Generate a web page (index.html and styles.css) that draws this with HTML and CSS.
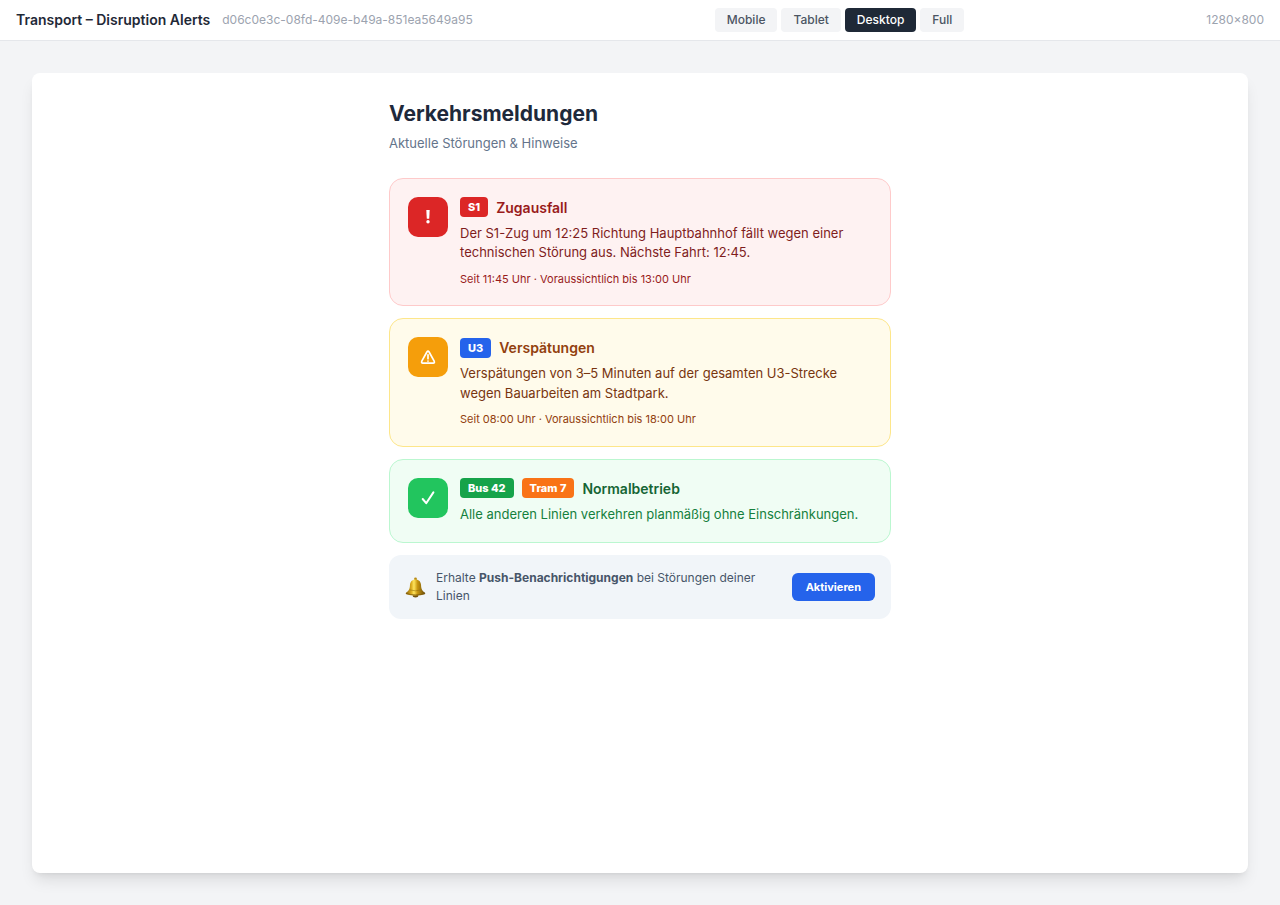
FILE: index.html
```html
<!DOCTYPE html>
<html lang="de">
<head>
<meta charset="utf-8">
<meta name="viewport" content="width=device-width, initial-scale=1">
<title>Transport – Disruption Alerts</title>
<link rel="stylesheet" href="styles.css">
</head>
<body>
<header class="toolbar">
  <div class="toolbar-info">
    <span class="toolbar-title">Transport – Disruption Alerts</span>
    <span class="toolbar-muted">d06c0e3c-08fd-409e-b49a-851ea5649a95</span>
  </div>
  <div class="sizes">
    <button type="button" class="size">Mobile</button>
    <button type="button" class="size">Tablet</button>
    <button type="button" class="size size-active" aria-pressed="true">Desktop</button>
    <button type="button" class="size">Full</button>
  </div>
  <span class="toolbar-muted">1280×800</span>
</header>
<div class="stage">
  <main class="preview">
    <div class="content">
      <h1 class="title">Verkehrsmeldungen</h1>
      <p class="subtitle">Aktuelle Störungen &amp; Hinweise</p>
      <div class="alerts">
        <article class="alert alert-red">
          <div class="alert-icon" aria-hidden="true">
            <svg width="16" height="16" viewBox="0 0 16 16" fill="#fff"><path d="M6.300 1h3.400l-.5 8.700H6.800z"/><circle cx="8" cy="12.700" r="1.700"/></svg>
          </div>
          <div class="alert-body">
            <div class="alert-head"><span class="line line-s1">S1</span><h2 class="alert-title">Zugausfall</h2></div>
            <p class="alert-text">Der S1-Zug um 12:25 Richtung Hauptbahnhof fällt wegen einer technischen Störung aus. Nächste Fahrt: 12:45.</p>
            <p class="alert-meta">Seit 11:45 Uhr · Voraussichtlich bis 13:00 Uhr</p>
          </div>
        </article>
        <article class="alert alert-amber">
          <div class="alert-icon" aria-hidden="true">
            <svg width="16" height="16" viewBox="0 0 16 16" fill="none" stroke="#fff" stroke-width="1.700" stroke-linejoin="round" stroke-linecap="round"><path d="M6.900 3Q8 1.400 9.100 3L14.200 12.200Q14.900 14.200 13.200 14.200H2.800Q1.100 14.200 1.800 12.200Z"/><path d="M8 5.800v3.900M8 12v.1"/></svg>
          </div>
          <div class="alert-body">
            <div class="alert-head"><span class="line line-u3">U3</span><h2 class="alert-title">Verspätungen</h2></div>
            <p class="alert-text">Verspätungen von 3–5 Minuten auf der gesamten U3-Strecke wegen Bauarbeiten am Stadtpark.</p>
            <p class="alert-meta">Seit 08:00 Uhr · Voraussichtlich bis 18:00 Uhr</p>
          </div>
        </article>
        <article class="alert alert-green">
          <div class="alert-icon" aria-hidden="true">
            <svg width="16" height="16" viewBox="0 0 16 16" fill="none" stroke="#fff" stroke-width="2" stroke-linecap="round" stroke-linejoin="round"><path d="M2.700 9l3.500 4.200L13.400 2.400"/></svg>
          </div>
          <div class="alert-body">
            <div class="alert-head"><span class="line line-bus">Bus 42</span><span class="line line-tram">Tram 7</span><h2 class="alert-title">Normalbetrieb</h2></div>
            <p class="alert-text">Alle anderen Linien verkehren planmäßig ohne Einschränkungen.</p>
          </div>
        </article>
        <section class="push">
          <svg class="bell" width="21" height="21" viewBox="0 0 22 22" aria-hidden="true">
            <defs>
              <linearGradient id="gold" x1="0" x2="1" y1="0" y2="0">
                <stop offset="0" stop-color="#8a6410"/><stop offset=".28" stop-color="#d9a91c"/><stop offset=".42" stop-color="#ffe45c"/><stop offset=".6" stop-color="#c8960f"/><stop offset="1" stop-color="#65490c"/>
              </linearGradient>
            </defs>
            <circle cx="11" cy="2" r="1.500" fill="#b78a19"/>
            <ellipse cx="11" cy="19.500" rx="3" ry="2" fill="#71500d"/>
            <path d="M11 2.500C7.300 2.500 5.400 5 5.200 8.500C5 13 4 14.800 1.200 16.300Q.2 17.300 1.300 18Q5 19.500 11 19.500T20.700 18Q21.800 17.300 20.800 16.300C18 14.800 17 13 16.800 8.500C16.600 5 14.700 2.500 11 2.500Z" fill="url(#gold)"/>
            <path d="M1.200 17.200Q6 18.800 11 18.800T20.800 17.200" fill="none" stroke="#7c590d" stroke-width=".8"/>
            <path d="M5 13.500Q11 15.500 17 13.500" fill="none" stroke="#93700e" stroke-width=".6"/>
          </svg>
          <p class="push-text">Erhalte <strong>Push-Benachrichtigungen</strong> bei Störungen deiner Linien</p>
          <button type="button" class="activate">Aktivieren</button>
        </section>
      </div>
    </div>
  </main>
</div>
</body>
</html>
```
FILE: styles.css
```css
* { box-sizing: border-box; }
body, h1, h2, p { margin: 0; }
body {
  min-height: 100vh;
  display: flex;
  flex-direction: column;
  background: #f3f4f6;
  font-family: Inter, "Liberation Sans", sans-serif;
  line-height: 1.5;
}
button { font-family: inherit; border: 0; cursor: pointer; }
.toolbar {
  display: flex;
  align-items: center;
  justify-content: space-between;
  padding: 8px 16px;
  background: #fff;
  border-bottom: 1px solid #e5e7eb;
}
.toolbar-info { display: flex; align-items: center; gap: 12px; }
.toolbar-title { font-size: 14px; line-height: 20px; font-weight: 600; color: #1f2937; }
.toolbar-muted { font-size: 12px; line-height: 16px; color: #9ca3af; }
.sizes { display: flex; gap: 4px; }
.size {
  padding: 4px 12px;
  border-radius: 4px;
  background: #f3f4f6;
  color: #4b5563;
  font-size: 12px;
  line-height: 16px;
  font-weight: 500;
}
.size-active { background: #1f2937; color: #fff; }
.stage { flex: 1; display: flex; padding: 32px; }
.preview {
  flex: 1;
  background: #fff;
  border-radius: 8px;
  padding: 24px;
  box-shadow: 0 10px 15px -3px rgba(0, 0, 0, .1), 0 4px 6px -4px rgba(0, 0, 0, .1);
}
.content { max-width: 502px; margin: 0 auto; }
.title { font-size: 21px; line-height: 33px; font-weight: 700; color: #1e293b; }
.subtitle { margin: 4px 0 24px; font-size: 13px; color: #64748b; }
.alerts { display: flex; flex-direction: column; gap: 12px; }
.alert {
  display: flex;
  gap: 12px;
  padding: 18px;
  border: 1px solid;
  border-radius: 14px;
}
.alert-icon {
  flex: none;
  width: 40px;
  height: 40px;
  display: grid;
  place-items: center;
  border-radius: 10px;
}
.alert-body { flex: 1; }
.alert-head { display: flex; align-items: center; gap: 8px; margin-bottom: 6px; }
.alert-title { font-size: 14px; font-weight: 600; }
.alert-text { font-size: 13px; }
.alert-meta { margin-top: 8px; font-size: 11px; }
.line {
  padding: 2px 8px;
  border-radius: 4px;
  color: #fff;
  font-size: 11px;
  line-height: 16px;
  font-weight: 800;
}
.line-s1 { background: #dc2626; }
.line-u3 { background: #2563eb; }
.line-bus { background: #16a34a; }
.line-tram { background: #f97316; }
.alert-red { background: #fef2f2; border-color: #fecaca; color: #7f1d1d; }
.alert-red .alert-icon { background: #dc2626; }
.alert-red .alert-title, .alert-red .alert-meta { color: #991b1b; }
.alert-amber { background: #fffbeb; border-color: #fde68a; color: #78350f; }
.alert-amber .alert-icon { background: #f59e0b; }
.alert-amber .alert-title, .alert-amber .alert-meta { color: #92400e; }
.alert-green { background: #f0fdf4; border-color: #bbf7d0; color: #15803d; }
.alert-green .alert-icon { background: #22c55e; }
.alert-green .alert-title { color: #166534; }
.push {
  display: flex;
  align-items: center;
  gap: 10px;
  padding: 14px 16px;
  border-radius: 12px;
  background: #f1f5f9;
}
.bell { flex: none; }
.push-text { flex: 1; font-size: 12px; color: #475569; }
.push-text strong { font-weight: 700; }
.activate {
  padding: 6px 14px;
  border-radius: 6px;
  background: #2563eb;
  color: #fff;
  font-size: 11px;
  line-height: 16px;
  font-weight: 700;
}
```
